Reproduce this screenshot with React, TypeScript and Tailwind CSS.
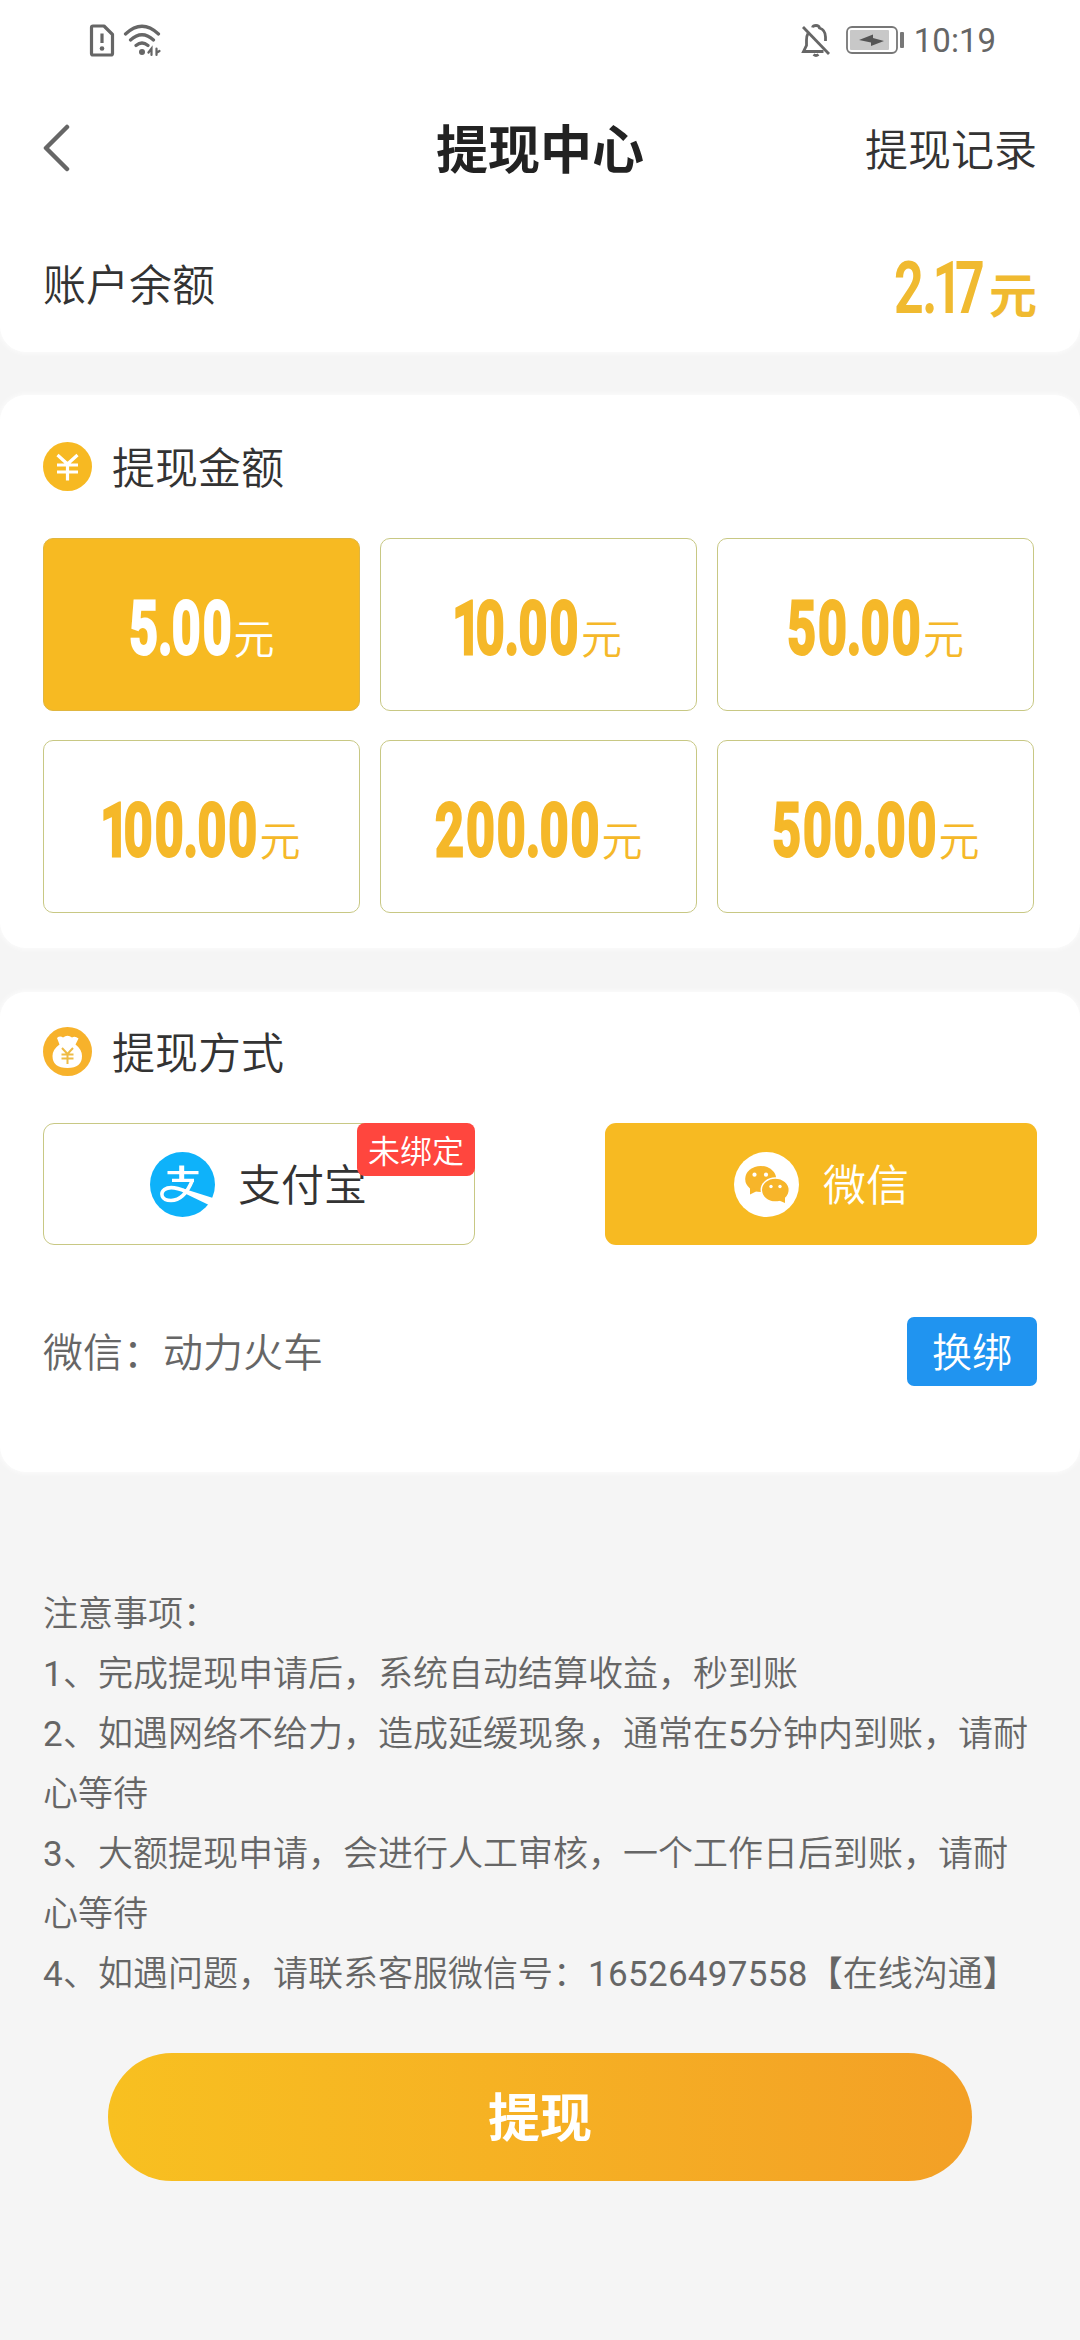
import { useState } from "react";
import clsx from "clsx";

const amounts = ["5.00", "10.00", "50.00", "100.00", "200.00", "500.00"];

const notices = [
  "注意事项：",
  "1、完成提现申请后，系统自动结算收益，秒到账",
  "2、如遇网络不给力，造成延缓现象，通常在5分钟内到账，请耐心等待",
  "3、大额提现申请，会进行人工审核，一个工作日后到账，请耐心等待",
  "4、如遇问题，请联系客服微信号：16526497558【在线沟通】",
];

// Condensed digits: the run is squeezed, so its box width is worked out from the characters
function Digits({ value, className }: { value: string; className?: string }) {
  const width = value
    .split("")
    .reduce((sum, c) => sum + (c === "." ? 12 : c === "1" ? 21 : 31), 0);

  return (
    <span className="inline-block whitespace-nowrap" style={{ width }}>
      <span className={clsx("inline-block origin-left font-bold", className)}>
        {value.split("").map((c, i) => (
          <span key={i} className={c === "." ? "-ml-[3px] -mr-[4px]" : c === "1" ? "-ml-[4px] -mr-[11px]" : ""}>
            {c}
          </span>
        ))}
      </span>
    </span>
  );
}

function StatusBar() {
  return (
    <div className="flex h-20 items-center justify-between pl-[89px] pr-[84px] text-[#666]">
      <div className="flex items-center gap-2">
        <svg width="26" height="33" viewBox="0 0 26 33" fill="none" stroke="currentColor" strokeWidth="3.200">
          <path d="M4 2H15L23.500 10.500V29.500Q23.500 31 22 31H4Q2.500 31 2.500 29.500V3.500Q2.500 2 4 2Z" strokeLinejoin="round" />
          <path d="M13 9.500V19" />
          <circle cx="13" cy="24.500" r="2.300" fill="currentColor" stroke="none" />
        </svg>
        <svg width="38" height="33" viewBox="0 0 38 33" fill="none" stroke="currentColor" strokeWidth="3.200" strokeLinecap="round">
          <path d="M2.500 10Q19 -5.500 35.500 10M7.500 16Q19 5.500 30.500 16M13 21.500Q19 16.500 25 21.500" />
          <circle cx="19" cy="28" r="3" fill="currentColor" stroke="none" />
          <path d="M28.500 31V24.500L25.500 28.500M33.500 24.500V31M34 28.500L36.500 27" strokeWidth="2.200" />
        </svg>
      </div>
      <div className="flex items-center">
        <svg width="30" height="33" viewBox="0 0 30 33" fill="none" stroke="currentColor" strokeWidth="2.800">
          <path d="M2 3L28 30" />
          <path d="M11.500 3.500Q12 1.500 15 1.500Q18 1.500 18.500 4Q24.500 6 24.500 13V17" />
          <path d="M7 9.500Q5.500 12 5.500 16V21.500L2.500 27.500H22.500" />
          <path d="M12.500 30.500Q15 32.500 17.500 30.500" />
        </svg>
        <svg className="ml-[15px]" width="60" height="28" viewBox="0 0 60 28">
          <rect x="1" y="1" width="50" height="26" rx="5" fill="none" stroke="#777" strokeWidth="1.800" />
          <rect x="4" y="4" width="39" height="20" rx="1" fill="#c8c8c8" />
          <path d="M13 14L27 8.500V12L38 15L25 20V16.500Z" fill="#555" />
          <rect x="54" y="6" width="4" height="16" rx="1" fill="#777" />
        </svg>
        <span className="ml-[8px] pt-[1px] text-[33px] font-normal leading-none">10:19</span>
      </div>
    </div>
  );
}

function YenIcon() {
  return (
    <svg width="49" height="49" viewBox="0 0 49 49" fill="none">
      <circle cx="24.500" cy="24.500" r="24.500" fill="#f7b922" />
      <path d="M14.500 13L24.500 22L34.500 13M14 23H35M14 30H35M24.500 22V38.500" stroke="#fff" strokeWidth="3.200" />
    </svg>
  );
}

function MoneyBagIcon() {
  return (
    <svg width="49" height="49" viewBox="0 0 49 49" fill="none">
      <circle cx="24.500" cy="24.500" r="24.500" fill="#f7b22b" />
      <path
        d="M14 11Q17 8.500 20 10.500Q24.500 7 29 10.500Q32 8.500 35.500 11.500L32.500 17.500Q39 22.500 39 29Q39 41 24.500 41Q9.500 41 9.500 29Q9.500 22.500 16.500 17.500Z"
        fill="#fff"
      />
      <path d="M19 21L24.500 27L30 21M18.500 27.500H30.500M18.500 31.500H30.500M24.500 27V37" stroke="#eebb45" strokeWidth="2" />
    </svg>
  );
}

function AlipayIcon() {
  return (
    <svg width="65" height="65" viewBox="0 0 65 65" fill="none" stroke="#fff">
      <circle cx="32.500" cy="32.500" r="32.500" fill="#0eb2fa" stroke="none" />
      <path d="M17.500 20.700H48.500M22 28.300H44" strokeWidth="3.200" />
      <path d="M31.700 13.500V28" strokeWidth="5" />
      <path d="M42.500 28C38 39 31 48.500 21 48.500C11 48.500 10 41 14.500 37.500C20 33.500 28 36 36 39.500" strokeWidth="3.600" />
      <path d="M33 36.500L63 46L60 53.500L34 41Z" fill="#fff" stroke="none" />
    </svg>
  );
}

function WechatIcon() {
  return (
    <svg width="65" height="65" viewBox="0 0 65 65">
      <circle cx="32.500" cy="32.500" r="32.500" fill="#fff" />
      <g fill="#f7b52a">
        <ellipse cx="26.700" cy="27" rx="15.500" ry="13" />
        <path d="M16 35V42.500L24 38.500Z" />
        <ellipse cx="41.300" cy="38" rx="14" ry="12" stroke="#fff" strokeWidth="1.400" />
        <path d="M44 48L51 51V44Z" />
      </g>
      <g fill="#fff">
        <circle cx="20.500" cy="22.700" r="2.100" />
        <circle cx="32" cy="22.700" r="2.100" />
        <circle cx="37" cy="34.500" r="1.700" />
        <circle cx="46" cy="34.500" r="1.700" />
      </g>
    </svg>
  );
}

export default function App() {
  const [amount, setAmount] = useState("5.00");

  return (
    <div className="min-h-[2340px] w-[1080px] overflow-hidden bg-[#f5f5f5] font-[350] text-[#333] [font-family:Roboto,'Noto_Sans_CJK_SC',sans-serif]">
      {/* Header and balance */}
      <div className="h-[352px] rounded-b-[26px] bg-white shadow-[0_0_6px_#fff]">
        <StatusBar />
        <div className="grid h-[140px] grid-cols-3 items-center px-[43px]">
          <svg className="-mt-1" width="27" height="48" viewBox="0 0 27 48" fill="none" stroke="#666" strokeWidth="4.500" strokeLinecap="round" strokeLinejoin="round">
            <path d="M24 3L3 24L24 45" />
          </svg>
          <h1 className="pt-[3px] text-center text-[52px] font-bold text-[#222]">提现中心</h1>
          <span className="pt-[2px] text-right text-[43px]">提现记录</span>
        </div>
        <div className="flex h-[130px] items-center justify-between px-[43px]">
          <span className="pt-[2px] text-[43px]">账户余额</span>
          <span className="flex items-baseline pt-[7px] leading-none text-[#f0ba30]">
            <Digits value="2.17" className="scale-x-[0.71] text-[73px] tracking-[1px]" />
            <span className="text-[48px] font-bold">元</span>
          </span>
        </div>
      </div>

      {/* Amount */}
      <div className="mt-[43px] h-[553px] rounded-[26px] bg-white px-[43px] pt-[44px] shadow-[0_0_6px_#fff]">
        <div className="flex h-[54px] items-center gap-[20px]">
          <YenIcon />
          <span className="pt-[6px] text-[43px]">提现金额</span>
        </div>
        <div className="mt-[45px] grid grid-cols-[317px_317px_317px] gap-x-5 gap-y-[29px]">
          {amounts.map((item) => (
            <button
              key={item}
              onClick={() => setAmount(item)}
              className={clsx(
                "flex h-[173px] items-baseline justify-center rounded-[10px] border pt-[53px] leading-none",
                item === amount ? "border-[#e0b640] bg-[#f7ba22] text-white" : "border-[#c8c884] bg-white text-[#f5b829]"
              )}
            >
              <Digits value={item} className="scale-x-[0.68] text-[74px] tracking-[3px] [-webkit-text-stroke:2.8px]" />
              <span className="text-[41px]">元</span>
            </button>
          ))}
        </div>
      </div>

      {/* Method */}
      <div className="mt-[44px] h-[480px] rounded-[26px] bg-white px-[43px] pt-[32px] shadow-[0_0_6px_#fff]">
        <div className="flex h-[54px] items-center gap-[20px]">
          <MoneyBagIcon />
          <span className="pt-[6px] text-[43px]">提现方式</span>
        </div>
        <div className="mt-[45px] flex justify-between">
          <div className="relative flex h-[122px] w-[432px] items-center rounded-[11px] border border-[#c8c884] pl-[106px]">
            <AlipayIcon />
            <span className="ml-[23px] pt-[5px] text-[43px]">支付宝</span>
            <span className="absolute -right-px -top-px flex h-[53px] w-[118px] items-center justify-center rounded-[8px] bg-[#ff463e] pt-[4px] text-[32px] text-white">
              未绑定
            </span>
          </div>
          <div className="flex h-[122px] w-[432px] items-center rounded-[11px] bg-[#f7ba22] pl-[129px]">
            <WechatIcon />
            <span className="ml-[24px] pt-[5px] text-[43px] text-white">微信</span>
          </div>
        </div>
        <div className="mt-[72px] flex h-[69px] items-center justify-between">
          <span className="pt-[5px] text-[40px] text-[#666]">微信：动力火车</span>
          <button className="h-[69px] w-[130px] rounded-[7px] bg-[#2094f0] pt-[5px] text-[40px] leading-none text-white">换绑</button>
        </div>
      </div>

      {/* Notices */}
      <div className="mt-[113px] px-[43px] text-[35px] leading-[60px] text-[#666] [text-spacing-trim:space-all]">
        {notices.map((line) => (
          <p key={line}>
            {line.split(/(\d+)/).map((part, i) =>
              i % 2 ? (
                <span key={i} className="font-normal tracking-[0.3px]">
                  {part}
                </span>
              ) : (
                part
              )
            )}
          </p>
        ))}
      </div>

      <button className="mx-auto mt-[48px] flex h-[128px] w-[864px] items-center justify-center rounded-full bg-gradient-to-r from-[#f8c020] to-[#f3a026] pt-[6px] text-[52px] font-bold text-white">
        提现
      </button>
    </div>
  );
}
